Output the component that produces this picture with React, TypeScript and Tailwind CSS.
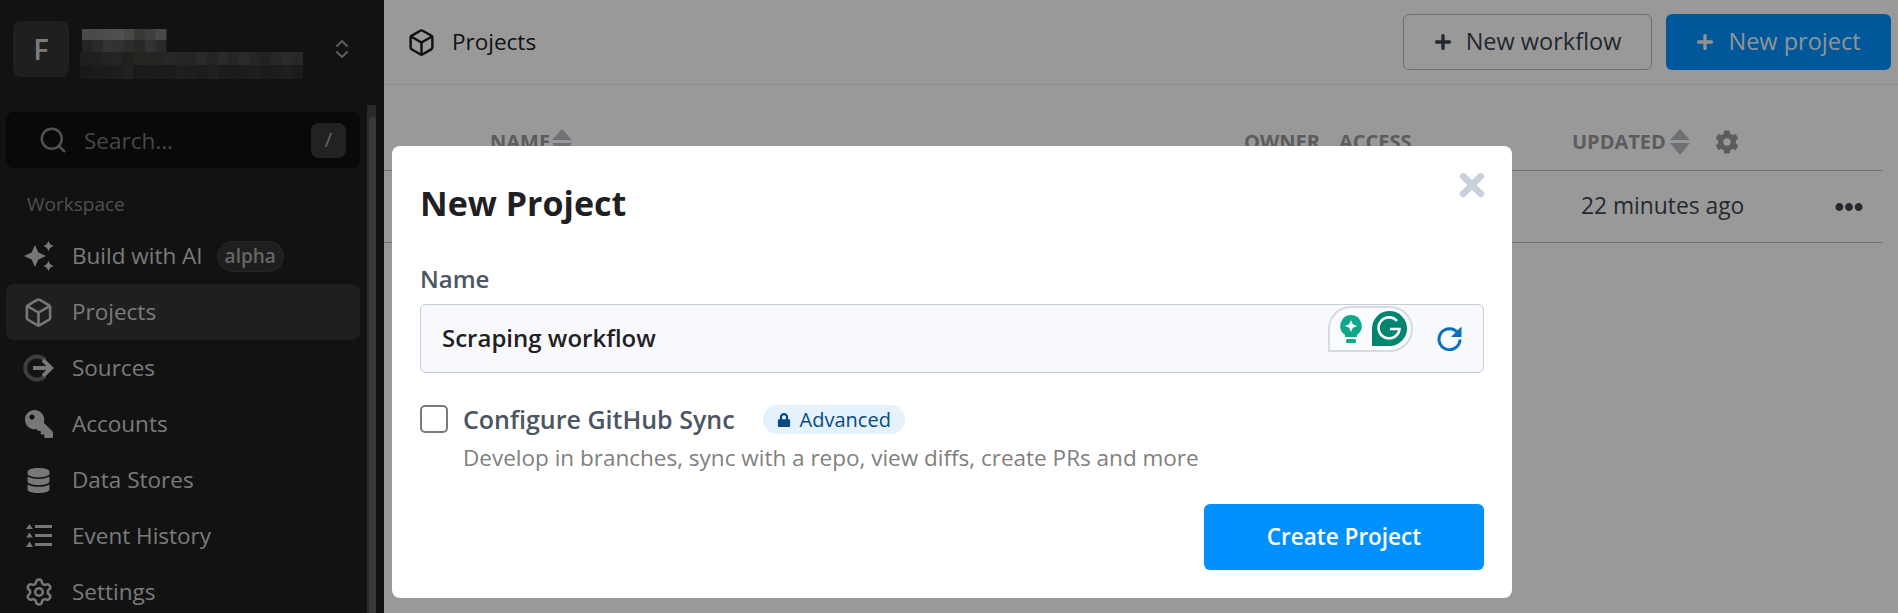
import { Box, ChevronsUpDown, Search, Settings } from "lucide-react";
import { FaCog, FaDatabase, FaEllipsisH, FaKey, FaLock, FaPlus, FaTimes } from "react-icons/fa";

// pixelated workspace name, blocks are pre-dim greys
const blurRows = [
  { x: 2, y: 0, h: 11, w: 10.500, shades: ["#7a7a7a", "#7c7c7c", "#828282", "#868686", "#787878", "#5e5e58", "#666a6c", "#7a7a7a"] },
  { x: 2, y: 11, h: 12, w: 10.500, shades: ["#3c3c3c", "#484848", "#565656", "#525250", "#4a4a46", "#424242", "#545454", "#464646"] },
  { x: 0, y: 23, h: 13, w: 10.600, shades: ["#343434", "#363636", "#3a3a3a", "#3c3c3c", "#38382f", "#3e3e38", "#3c3c36", "#3e3e3e", "#424242", "#3e3e3e", "#3c3c3c", "#464646", "#3c3c3c", "#464646", "#3e3e3e", "#484848", "#3e3e3e", "#3a3a3a", "#424242", "#484848", "#444444"] },
  { x: 0, y: 36, h: 14, w: 10.600, shades: ["#2a2a2a", "#2e2e2e", "#303030", "#323232", "#383838", "#2c2c2c", "#2e2e2e", "#303030", "#2e2e2e", "#343434", "#323232", "#2e3030", "#343636", "#303030", "#2c2e2e", "#303030", "#323232", "#2e2e2e", "#303030", "#343434", "#2e2e2e"] },
];

function BlurredName() {
  return (
    <svg width="224" height="50" viewBox="0 0 224 50" className="ml-[11px] mt-[8px]">
      {blurRows.map((row) =>
        row.shades.map((shade, i) => (
          <rect key={`${row.y}-${i}`} x={row.x + i * row.w} y={row.y} width={row.w + 0.5} height={row.h} fill={shade} />
        )),
      )}
    </svg>
  );
}

function SparkleIcon() {
  return (
    <svg width="30" height="30" viewBox="0 0 30 30" fill="currentColor">
      <path d="M11 4 L14.400 11.600 L22 15 L14.400 18.400 L11 26 L7.600 18.400 L0 15 L7.600 11.600 Z" />
      <path d="M24.500 0 L26.300 3.200 L29.500 5 L26.300 6.800 L24.500 10 L22.700 6.800 L19.500 5 L22.700 3.200 Z" />
      <path d="M24.500 20 L26.300 23.200 L29.500 25 L26.300 26.800 L24.500 30 L22.700 26.800 L19.500 25 L22.700 23.200 Z" />
    </svg>
  );
}

function SourcesIcon() {
  return (
    <svg width="33" height="28" viewBox="0 0 33 28" fill="none">
      <path d="M23 6 A11.5 11.5 0 1 0 23 22" stroke="#666" strokeWidth="4" />
      <path d="M11 14 H29 M21 6 L29 14 L21 22" stroke="#c6c6c6" strokeWidth="4" />
    </svg>
  );
}

function HistoryIcon() {
  return (
    <svg width="26" height="24" viewBox="0 0 26 24" fill="currentColor">
      <path d="M3.500 0 L7 5 H0 Z M3.500 8.500 L7 13.500 H0 Z M3.500 17.500 L7 23 H0 Z" />
      <rect x="9" y="1" width="17" height="3" />
      <rect x="9" y="10" width="17" height="3" />
      <rect x="9" y="19" width="17" height="3" />
    </svg>
  );
}

function SortIcon({ className }: { className?: string }) {
  return (
    <svg width="20" height="26" viewBox="0 0 20 26" className={className} fill="currentColor">
      <path d="M10 0 L20 11 H0 Z M0 14 H20 L10 26 Z" />
    </svg>
  );
}

function RefreshIcon() {
  return (
    <svg width="25" height="25" viewBox="0 0 25 25" fill="none">
      <path d="M21 7 A10.500 10.500 0 1 0 23 13.500" stroke="#0b6fc0" strokeWidth="3" />
      <path d="M24.500 0.500 V11 H14 Z" fill="#0b6fc0" />
    </svg>
  );
}

function GrammarlyBadge() {
  return (
    <div className="absolute left-[907px] top-[1px] flex h-[46px] w-[85px] items-center rounded-t-[24px] rounded-br-[24px] border-2 border-[#d5dae3] bg-[#fbfcfd]">
      <svg width="22" height="29" viewBox="0 0 22 29" className="ml-[10px]">
        <path d="M11 0 A11 11 0 0 1 17 20 V22 H5 V20 A11 11 0 0 1 11 0 Z" fill="#0fa88a" />
        <path d="M11 5 L12.800 9.200 L17 11 L12.800 12.800 L11 17 L9.200 12.800 L5 11 L9.200 9.200 Z" fill="#fff" />
        <rect x="6" y="24" width="10" height="4" rx="1.500" fill="#0fa88a" />
      </svg>
      <svg width="35" height="36" viewBox="0 0 35 36" className="ml-[10px]">
        <path d="M17.500 0 A17.500 17.500 0 0 1 17.500 35 H0 V17.500 A17.500 17.500 0 0 1 17.500 0 Z" fill="#028570" />
        <path d="M25 10 A10.500 10.500 0 1 0 27.500 18 H18" fill="none" stroke="#fff" strokeWidth="2.600" />
      </svg>
    </div>
  );
}

function NavRow({ icon, label, active, badge }: { icon: React.ReactNode; label: string; active?: boolean; badge?: boolean }) {
  return (
    <div className={`flex h-[56px] items-center rounded-lg ${active ? "bg-[#343434]" : ""}`}>
      <div className="flex w-[66px] justify-center pr-[1px] text-[#c6c6c6]">{icon}</div>
      <span className="text-[22.500px] text-[#cbcbcb]">{label}</span>
      {badge && (
        <span className="ml-[14px] rounded-full border border-[#404040] bg-[#333] px-[7px] py-[1px] text-[19px] font-semibold leading-[27px] text-[#aaa]">
          alpha
        </span>
      )}
    </div>
  );
}

function Sidebar() {
  return (
    <aside className="h-screen w-[384px] shrink-0 overflow-hidden bg-[#1e1e1e]">
      <div className="flex h-[105px] items-start pl-[13px] pt-[21px]">
        <div className="flex size-[56px] items-center justify-center rounded-lg bg-[#343434] text-[29px] font-semibold text-[#cfcfcf]">F</div>
        <BlurredName />
        <ChevronsUpDown size={24} strokeWidth={2} className="ml-[26px] mt-[16px] text-[#999]" />
      </div>
      <div className="flex">
        <div className="w-[367px] pl-[6px] pr-[7px] pt-[7px]">
          <div className="flex h-[56px] items-center rounded-lg bg-[#0f0f0f] pl-[32px] pr-[14px]">
            <Search size={30} strokeWidth={2} className="text-[#888]" />
            <span className="ml-[16px] flex-1 pt-[1px] text-[22.500px] text-[#777]">Search...</span>
            <span className="flex size-[35px] items-center justify-center rounded-lg bg-[#3a3a3a] text-[20px] text-[#aaa]">/</span>
          </div>
          <div className="flex h-[60px] items-center pl-[21px] pt-[12px] text-[19px] text-[#848484]">Workspace</div>
          <NavRow icon={<SparkleIcon />} label="Build with AI" badge />
          <NavRow icon={<Box size={31} strokeWidth={2} />} label="Projects" active />
          <NavRow icon={<SourcesIcon />} label="Sources" />
          <NavRow icon={<FaKey size={28} className="-scale-x-100" />} label="Accounts" />
          <NavRow icon={<FaDatabase size={25} />} label="Data Stores" />
          <NavRow icon={<HistoryIcon />} label="Event History" />
          <NavRow icon={<Settings size={30} strokeWidth={2} />} label="Settings" />
        </div>
        <div className="h-[520px] w-[9px] border-l-2 border-[#464646] bg-[#464646] pt-[12px]">
          <div className="h-full rounded-t-sm bg-[#606060]" />
        </div>
      </div>
    </aside>
  );
}

function Main() {
  return (
    <main className="min-w-0 flex-1 bg-white">
      <header className="flex h-[85px] items-center border-b border-[#eee] pl-[23px] pr-[7px]">
        <Box size={29} strokeWidth={2} className="text-[#1c1c1c]" />
        <span className="ml-[16px] text-[22.500px] text-[#1c1c1c]">Projects</span>
        <button className="ml-auto flex h-[56px] w-[249px] items-center justify-center gap-[14px] rounded-md border border-[#b5bcc6] text-[23.500px] text-[#3a4350]">
          <FaPlus size={18} />
          New workflow
        </button>
        <button className="ml-[14px] flex h-[56px] w-[225px] items-center justify-center gap-[14px] rounded-md bg-[#0091ff] text-[23.500px] text-[#f3f4f6]">
          <FaPlus size={18} />
          New project
        </button>
      </header>
      <div className="mr-[15px]">
        <div className="grid h-[86px] grid-cols-[860px_95px_233px_143px_1fr] items-center border-b border-[#bfbfbf] pt-[28px] text-[20px] font-bold text-[#9a9a9a]">
          <span className="flex items-center gap-[2px] pl-[106px]">
            NAME
            <SortIcon className="text-[#b8bdc4]" />
          </span>
          <span>OWNER</span>
          <span>ACCESS</span>
          <span className="flex items-center gap-[4px]">
            UPDATED
            <SortIcon className="text-[#b8bdc4]" />
          </span>
          <FaCog size={24} className="text-[#9a9a9a]" />
        </div>
        <div className="grid h-[72px] grid-cols-[1197px_254px_1fr] items-center border-b border-[#bfbfbf]">
          <span />
          <span className="text-[22.800px] text-[#3f4650]">22 minutes ago</span>
          <FaEllipsisH size={28} className="text-[#3f4650]" />
        </div>
      </div>
    </main>
  );
}

function NewProjectModal() {
  return (
    <div className="fixed inset-0 bg-black/40 pl-[392px] pt-[146px]">
      <div className="relative h-[452px] w-[1120px] rounded-lg bg-white px-[28px] pt-[34px]">
        <FaTimes size={36} className="absolute right-[22px] top-[21px] text-[#c8d1db]" />
        <h2 className="text-[34px] font-bold leading-[46px] text-[#1f2022]">New Project</h2>
        <label className="mt-[38px] block text-[24px] font-semibold leading-[30px] text-[#4b5563]">Name</label>
        <div className="relative mt-[10px] flex h-[69px] items-center rounded-md border border-[#c5ccd9] bg-[#f8f9fc] pl-[21px] pr-[21px]">
          <span className="flex-1 pb-[2px] text-[24px] font-semibold text-[#1f2022]">Scraping workflow</span>
          <GrammarlyBadge />
          <RefreshIcon />
        </div>
        <div className="mt-[31px] flex">
          <div className="mt-[1px] size-[28px] rounded-[5px] border-2 border-[#7a7a7a]" />
          <div className="ml-[15px]">
            <div className="flex h-[31px] items-center">
              <span className="text-[25px] font-semibold text-[#4b5563]">Configure GitHub Sync</span>
              <span className="ml-[28px] flex h-[29px] items-center gap-[9px] rounded-full bg-[#e3f2fd] px-[14px] text-[20px] text-[#0a4a7f]">
                <FaLock size={14} />
                Advanced
              </span>
            </div>
            <p className="mt-[8px] text-[22.500px] leading-[30px] text-[#808080]">Develop in branches, sync with a repo, view diffs, create PRs and more</p>
          </div>
        </div>
        <div className="mt-[31px] flex justify-end">
          <button className="h-[66px] w-[280px] rounded-md bg-[#0091ff] text-[22.500px] font-semibold text-white">Create Project</button>
        </div>
      </div>
    </div>
  );
}

export default function App() {
  return (
    <div className="flex h-screen overflow-hidden font-['Open_Sans','Liberation_Sans',sans-serif]">
      <Sidebar />
      <Main />
      <NewProjectModal />
    </div>
  );
}
